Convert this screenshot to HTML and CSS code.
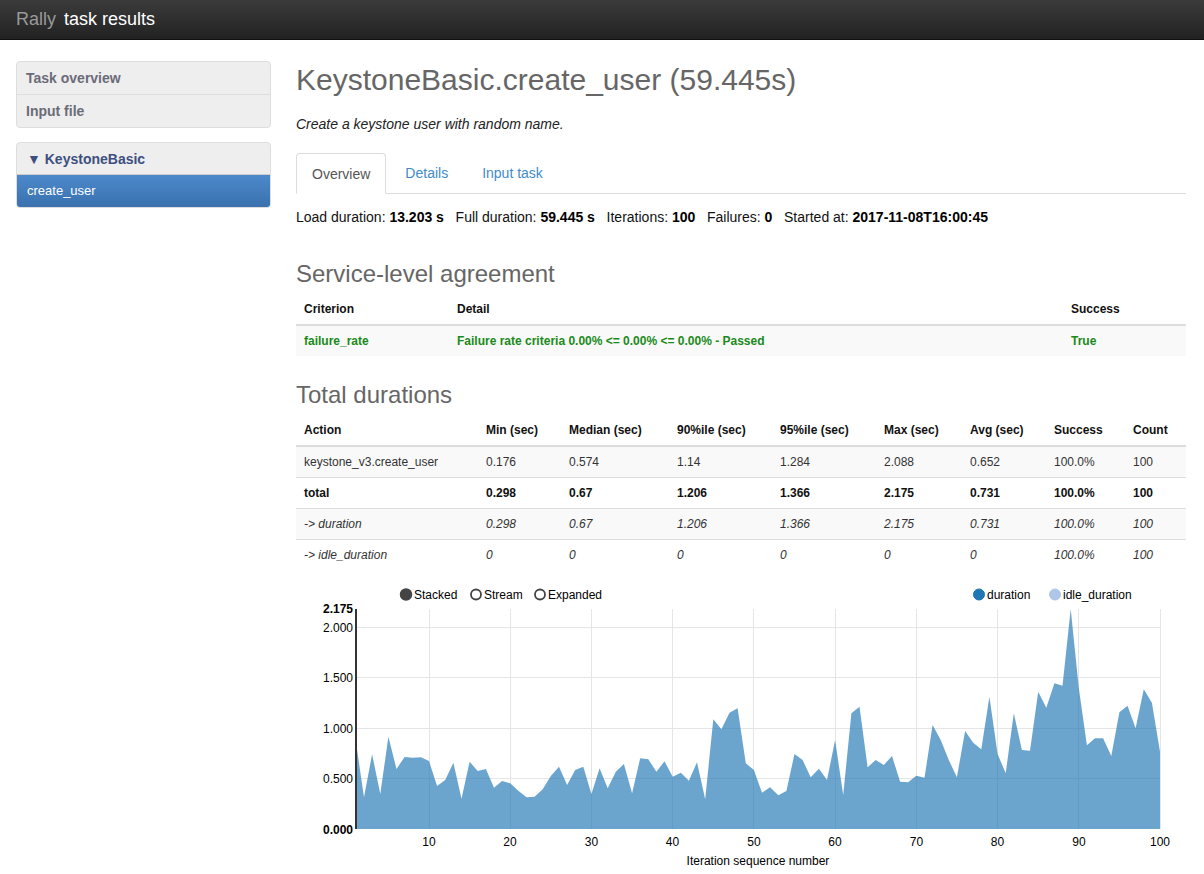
FILE: index.html
```html
<!DOCTYPE html>
<html>
<head>
<meta charset="utf-8">
<title>Rally task results</title>
<link rel="stylesheet" href="styles.css">
</head>
<body>
<div class="topbar">
  <span class="brand">Rally</span>
  <span class="brand-title">task results</span>
</div>
<div class="page">
  <aside class="sidebar">
    <div class="navbox">
      <div class="nav-item">Task overview</div>
      <div class="nav-item">Input file</div>
    </div>
    <div class="navbox">
      <div class="nav-group">&#9660; KeystoneBasic</div>
      <div class="nav-active">create_user</div>
    </div>
  </aside>
  <main class="main">
    <h1 class="title">KeystoneBasic.create_user (59.445s)</h1>
    <p class="desc">Create a keystone user with random name.</p>
    <div class="tabs">
      <span class="tab tab-active">Overview</span>
      <span class="tab">Details</span>
      <span class="tab">Input task</span>
    </div>
    <div class="stats">
      Load duration: <b>13.203 s</b>&nbsp;&nbsp; Full duration: <b>59.445 s</b>&nbsp;&nbsp; Iterations: <b>100</b>&nbsp;&nbsp; Failures: <b>0</b>&nbsp;&nbsp; Started at: <b>2017-11-08T16:00:45</b>
    </div>

    <h2 class="section">Service-level agreement</h2>
    <table class="tbl sla">
      <colgroup><col class="c-crit"><col class="c-detail"><col class="c-succ"></colgroup>
      <thead><tr><th>Criterion</th><th>Detail</th><th>Success</th></tr></thead>
      <tbody>
        <tr class="pass"><td>failure_rate</td><td>Failure rate criteria 0.00% &lt;= 0.00% &lt;= 0.00% - Passed</td><td>True</td></tr>
      </tbody>
    </table>

    <h2 class="section">Total durations</h2>
    <table class="tbl dur">
      <colgroup>
        <col class="w182"><col class="w83"><col class="w108"><col class="w103"><col class="w104"><col class="w86"><col class="w84"><col class="w79"><col class="w61">
      </colgroup>
      <thead><tr><th>Action</th><th>Min (sec)</th><th>Median (sec)</th><th>90%ile (sec)</th><th>95%ile (sec)</th><th>Max (sec)</th><th>Avg (sec)</th><th>Success</th><th>Count</th></tr></thead>
      <tbody>
        <tr><td>keystone_v3.create_user</td><td>0.176</td><td>0.574</td><td>1.14</td><td>1.284</td><td>2.088</td><td>0.652</td><td>100.0%</td><td>100</td></tr>
        <tr class="bold"><td>total</td><td>0.298</td><td>0.67</td><td>1.206</td><td>1.366</td><td>2.175</td><td>0.731</td><td>100.0%</td><td>100</td></tr>
        <tr class="ital"><td>-&gt; duration</td><td>0.298</td><td>0.67</td><td>1.206</td><td>1.366</td><td>2.175</td><td>0.731</td><td>100.0%</td><td>100</td></tr>
        <tr class="ital"><td>-&gt; idle_duration</td><td>0</td><td>0</td><td>0</td><td>0</td><td>0</td><td>0</td><td>100.0%</td><td>100</td></tr>
      </tbody>
    </table>

    <div class="chart">
      <svg width="890" height="294" viewBox="296 580 890 294" xmlns="http://www.w3.org/2000/svg">
        <g class="legend">
          <circle cx="406" cy="594.5" r="5.5" fill="#444" stroke="#444" stroke-width="1.5"/>
          <text x="414" y="599">Stacked</text>
          <circle cx="476" cy="594.5" r="5" fill="none" stroke="#444" stroke-width="1.8"/>
          <text x="484" y="599">Stream</text>
          <circle cx="540" cy="594.5" r="5" fill="none" stroke="#444" stroke-width="1.8"/>
          <text x="548" y="599">Expanded</text>
          <circle cx="979" cy="594.5" r="5.5" fill="#1f77b4" stroke="#1f77b4" stroke-width="1"/>
          <text x="987" y="599">duration</text>
          <circle cx="1055" cy="594.5" r="5.5" fill="#aec7e8" stroke="#aec7e8" stroke-width="1"/>
          <text x="1063" y="599">idle_duration</text>
        </g>
        <g class="grid" stroke="#e5e5e5" stroke-width="1">
          <line x1="356" y1="627.5" x2="1160" y2="627.5"/>
          <line x1="356" y1="677.5" x2="1160" y2="677.5"/>
          <line x1="356" y1="728.5" x2="1160" y2="728.5"/>
          <line x1="356" y1="778.5" x2="1160" y2="778.5"/>
          <line x1="429.5" y1="609" x2="429.5" y2="829"/>
          <line x1="510.5" y1="609" x2="510.5" y2="829"/>
          <line x1="591.5" y1="609" x2="591.5" y2="829"/>
          <line x1="672.5" y1="609" x2="672.5" y2="829"/>
          <line x1="753.5" y1="609" x2="753.5" y2="829"/>
          <line x1="835.5" y1="609" x2="835.5" y2="829"/>
          <line x1="916.5" y1="609" x2="916.5" y2="829"/>
          <line x1="997.5" y1="609" x2="997.5" y2="829"/>
          <line x1="1078.5" y1="609" x2="1078.5" y2="829"/>
          <line x1="1160.5" y1="609" x2="1160.5" y2="829"/>
        </g>
        <path class="area" d="M355.9,829 L355.9,741.7 L364.0,797.3 L372.1,754.3 L380.3,794 L388.4,736.7 L396.5,769 L404.6,757 L412.8,757.7 L420.9,757.3 L429.0,761 L437.1,786 L445.2,780 L453.4,762.7 L461.5,798.7 L469.6,761.7 L477.7,771 L485.9,769 L494.0,787.7 L502.1,781 L510.2,783.3 L518.3,790.7 L526.5,797.3 L534.6,796.7 L542.7,789.3 L550.8,776 L559.0,766.7 L567.1,785 L575.2,770 L583.3,766.7 L591.4,794 L599.6,768.3 L607.7,788.3 L615.8,771.7 L623.9,764 L632.1,793.3 L640.2,758.3 L648.3,759.3 L656.4,771.7 L664.5,761.3 L672.7,776.7 L680.8,772.7 L688.9,780.7 L697.0,762.3 L705.2,799.3 L713.3,719.3 L721.4,729.3 L729.5,712.7 L737.6,708.3 L745.8,763.3 L753.9,770 L762.0,792.7 L770.1,787.3 L778.3,795.3 L786.4,791 L794.5,754 L802.6,760 L810.7,777.3 L818.9,768.7 L827.0,780 L835.1,740 L843.2,795 L851.4,713.3 L859.5,706.7 L867.6,767.3 L875.7,760 L883.8,765 L892.0,756 L900.1,781.7 L908.2,782.3 L916.3,775.7 L924.5,777.7 L932.6,725 L940.7,740 L948.8,760 L956.9,777.3 L965.1,731 L973.2,742.7 L981.3,749.3 L989.4,696.7 L997.6,754 L1005.7,773.3 L1013.8,713.3 L1021.9,750 L1030.0,750.7 L1038.2,691.7 L1046.3,707.7 L1054.4,683.3 L1062.5,685.7 L1070.7,609 L1078.8,688 L1086.9,745.3 L1095.0,738.3 L1103.1,738.3 L1111.3,756 L1119.4,712.3 L1127.5,705.7 L1135.6,728.3 L1143.8,689.3 L1151.9,702.7 L1160.0,751.7 L1160.0,829 Z"/>
        <line x1="356" y1="609" x2="356" y2="829" stroke="#333" stroke-width="2"/>
        <g class="ylab" text-anchor="end">
          <text x="353" y="613" class="b">2.175</text>
          <text x="353" y="631.5">2.000</text>
          <text x="353" y="682">1.500</text>
          <text x="353" y="732.5">1.000</text>
          <text x="353" y="783">0.500</text>
          <text x="353" y="833.5" class="b">0.000</text>
        </g>
        <g class="xlab" text-anchor="middle">
          <text x="429" y="846">10</text>
          <text x="510" y="846">20</text>
          <text x="591.5" y="846">30</text>
          <text x="672.5" y="846">40</text>
          <text x="754" y="846">50</text>
          <text x="835" y="846">60</text>
          <text x="916.5" y="846">70</text>
          <text x="997.5" y="846">80</text>
          <text x="1079" y="846">90</text>
          <text x="1160" y="846">100</text>
          <text x="758" y="865">Iteration sequence number</text>
        </g>
      </svg>
    </div>
  </main>
</div>
</body>
</html>
```

FILE: styles.css
```css
* { box-sizing: border-box; }
html, body { margin: 0; padding: 0; background: #fff; }
body {
  font-family: "Liberation Sans", Arial, sans-serif;
  font-size: 14px;
  color: #333;
  overflow: hidden;
}
.topbar {
  height: 40px;
  background: linear-gradient(to bottom, #3b3b3b, #222);
  display: flex;
  align-items: center;
  padding-left: 16px;
  font-size: 18px;
  border-bottom: 1px solid #111;
}
.brand { color: #999; margin-right: 8px; }
.brand-title { color: #fff; }

.page {
  display: flex;
  align-items: flex-start;
  padding-left: 16px;
}
.sidebar {
  width: 255px;
  margin-top: 21px;
  flex: none;
}
.navbox {
  background: #eee;
  border: 1px solid #ddd;
  border-radius: 4px;
  margin-bottom: 14px;
  overflow: hidden;
}
.nav-item {
  height: 33px;
  line-height: 32px;
  padding-left: 9px;
  font-weight: bold;
  color: #6b6b78;
  border-bottom: 1px solid #ddd;
}
.nav-item:last-child { border-bottom: none; height: 32px; }
.nav-group {
  height: 32px;
  line-height: 32px;
  padding-left: 10px;
  font-weight: bold;
  color: #3d4f7f;
  border-bottom: 1px solid #ccc;
}
.nav-active {
  height: 32px;
  line-height: 31px;
  padding-left: 10px;
  font-size: 13px;
  color: #fff;
  background: linear-gradient(to bottom, #4c89cb, #3a71ae);
}

.main {
  width: 890px;
  margin-left: 25px;
  flex: none;
}
.title {
  font-size: 30px;
  font-weight: normal;
  color: #666;
  margin: 23px 0 0;
  line-height: 33px;
}
.desc {
  font-style: italic;
  margin: 18px 0 0;
  line-height: 20px;
  color: #222;
}
.tabs {
  margin-top: 19px;
  display: flex;
  border-bottom: 1px solid #ddd;
  height: 41px;
}
.tab {
  padding: 0 15px;
  line-height: 40px;
  margin-right: 4px;
  color: #428bca;
}
.tab-active {
  color: #555;
  border: 1px solid #ddd;
  border-bottom-color: #fff;
  border-radius: 4px 4px 0 0;
  height: 41px;
  background: #fff;
}
.stats {
  margin-top: 13px;
  line-height: 20px;
  color: #111;
}
.stats b { color: #000; }
.section {
  font-size: 24px;
  font-weight: normal;
  color: #666;
  margin: 33px 0 0;
  line-height: 27px;
}
.section + .tbl { margin-top: 7px; }
.tbl {
  width: 890px;
  border-collapse: collapse;
  table-layout: fixed;
  font-size: 12px;
}
.tbl th {
  text-align: left;
  padding: 8px 8px 8px;
  line-height: 14px;
  border-bottom: 2px solid #ddd;
  color: #111;
}
.tbl td {
  padding: 8px 8px;
  line-height: 14px;
  border-top: 1px solid #ddd;
  color: #333;
  white-space: nowrap;
}
.tbl tbody tr:nth-child(odd) td { background: #f9f9f9; }
.c-crit { width: 153px; }
.c-detail { width: 614px; }
.c-succ { width: 123px; }
.pass td { color: #1a8a1a; font-weight: bold; }
.sla + .section { margin-top: 25px; }
.w182 { width: 182px; } .w83 { width: 83px; } .w108 { width: 108px; }
.w103 { width: 103px; } .w104 { width: 104px; } .w86 { width: 86px; }
.w84 { width: 84px; } .w79 { width: 79px; } .w61 { width: 61px; }
.bold td { font-weight: bold; color: #111; }
.ital td { font-style: italic; }

.chart { margin-top: 10px; height: 294px; }
.chart svg { display: block; font-family: "Liberation Sans", Arial, sans-serif; font-size: 12px; }
.legend text { fill: #000; }
.area { fill: #1f77b4; fill-opacity: 0.66; stroke: none; }
.ylab text, .xlab text { fill: #000; }
.ylab .b { font-weight: bold; }
```
